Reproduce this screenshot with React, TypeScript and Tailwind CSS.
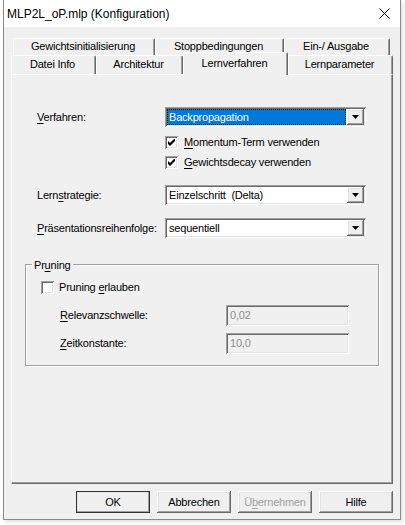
import React from "react";

const raised =
  "shadow-[inset_-1px_-1px_0_#696969,inset_1px_1px_0_#ffffff,inset_-2px_-2px_0_#a0a0a0,inset_2px_2px_0_#e3e3e3]";
const sunken =
  "shadow-[inset_1px_1px_0_#a0a0a0,inset_-1px_-1px_0_#ffffff,inset_2px_2px_0_#696969,inset_-2px_-2px_0_#e3e3e3]";

function U({ children }: { children: React.ReactNode }) {
  return <span className="underline underline-offset-[2px] decoration-[1px]">{children}</span>;
}

function Tab({ label, cls, selected }: { label: string; cls: string; selected?: boolean }) {
  return (
    <div
      className={
        "flex items-center justify-center pr-[2px] border-t border-l border-r border-t-white border-l-white border-r-[#696969] rounded-tl-[2px] rounded-tr-[2px] shadow-[inset_-1px_0_0_#a0a0a0] bg-[#f0f0f0] " +
        cls +
        (selected ? " relative z-10 -mb-px pb-[2px]" : "")
      }
    >
      {label}
    </div>
  );
}

function Arrow() {
  return (
    <svg width="7" height="4" viewBox="0 0 7 4">
      <polygon points="0,0 7,0 3.5,4" fill="#000" />
    </svg>
  );
}

function Combo({ value, selected }: { value: string; selected?: boolean }) {
  return (
    <div className={"w-[201px] h-[20px] bg-white flex p-[2px] " + sunken}>
      <div className="flex-1 flex items-stretch">
        {selected ? (
          <div className="flex-1 flex items-center bg-[#0078d7] text-white pl-[1px] mr-[1px] border border-dotted border-[#222]">
            {value}
          </div>
        ) : (
          <div className="flex-1 flex items-center pl-[2px] whitespace-pre">{value}</div>
        )}
      </div>
      <div className={"w-[17px] bg-[#f0f0f0] flex items-center justify-center " + raised}>
        <Arrow />
      </div>
    </div>
  );
}

function Check({ checked }: { checked?: boolean }) {
  return (
    <span className={"w-[13px] h-[13px] bg-white flex items-center justify-center shrink-0 " + sunken}>
      {checked && (
        <svg width="7" height="7" viewBox="0 0 7 7">
          <polygon points="0,2 2,4 7,-1 7,2 2,7 0,5" fill="#000" />
        </svg>
      )}
    </span>
  );
}

function Btn({ children, cls }: { children: React.ReactNode; cls?: string }) {
  return (
    <div
      className={
        "w-[74px] h-[22px] bg-[#f0f0f0] flex items-center justify-center " + raised + " " + (cls || "")
      }
    >
      {children}
    </div>
  );
}

export default function App() {
  return (
    <div className="w-[405px] h-[525px] bg-white font-['Liberation_Sans',Arial,sans-serif] text-[11px] tracking-[-0.2px] text-black">
      <div className="ml-[3px] w-[398px] h-[520px] border-l border-r border-b border-[#8a8a8a] bg-[#f0f0f0] flex flex-col shadow-[2px_2px_4px_rgba(0,0,0,0.12)]">
        {/* title bar */}
        <div className="h-[27px] bg-white flex items-center justify-between pl-[3px] pr-[10px] shrink-0">
          <span className="text-[12px] tracking-normal">MLP2L_oP.mlp (Konfiguration)</span>
          <svg width="11" height="11" viewBox="0 0 11 11">
            <path d="M0.5 0.5 L10.5 10.5 M10.5 0.5 L0.5 10.5" stroke="#000" strokeWidth="1" />
          </svg>
        </div>

        {/* body */}
        <div className="flex-1 flex flex-col px-[7px] pt-[11px] pb-[6px]">
          {/* tabs row 1 */}
          <div className="flex h-[17px] ml-[2px]">
            <Tab label="Gewichtsinitialisierung" cls="w-[142px] h-[18px] pb-[2px]" />
            <Tab label="Stoppbedingungen" cls="w-[129px] h-[18px] pb-[2px]" />
            <Tab label="Ein-/ Ausgabe" cls="w-[106px] h-[18px] pb-[2px]" />
          </div>
          {/* tabs row 2 */}
          <div className="flex h-[19px] items-end relative">
            <Tab label="Datei Info" cls="w-[85px] h-[19px] pb-[1px]" />
            <Tab label="Architektur" cls="w-[87px] h-[19px] pb-[1px]" />
            <Tab label="Lernverfahren" cls="w-[105px] h-[23px]" selected />
            <Tab label="Lernparameter" cls="w-[105px] h-[19px] pb-[1px]" />
          </div>

          {/* panel */}
          <div className="h-[410px] border border-t-white border-l-white border-r-[#696969] border-b-[#696969] shadow-[inset_-1px_-1px_0_#a0a0a0] flex flex-col">
            <div className="flex items-center mt-[32px] pl-[25px]">
              <div className="w-[128px]">
                <U>V</U>erfahren:
              </div>
              <Combo value="Backpropagation" selected />
            </div>
            <div className="flex items-center h-[20px] mt-[5px] pl-[153px]">
              <Check checked />
              <span className="ml-[6px]">
                <U>M</U>omentum-Term verwenden
              </span>
            </div>
            <div className="flex items-center h-[20px] pl-[153px]">
              <Check checked />
              <span className="ml-[6px]">
                <U>G</U>ewichtsdecay verwenden
              </span>
            </div>
            <div className="flex items-center mt-[13px] pl-[25px]">
              <div className="w-[128px]">
                Lern<U>s</U>trategie:
              </div>
              <Combo value="Einzelschritt  (Delta)" />
            </div>
            <div className="flex items-center mt-[13px] pl-[25px]">
              <div className="w-[128px]">
                <U>P</U>räsentationsreihenfolge:
              </div>
              <Combo value="sequentiell" />
            </div>

            {/* group box */}
            <div className="relative mt-[26px] ml-[13px] w-[354px] h-[102px] border border-[#a0a0a0] shadow-[inset_1px_1px_0_#ffffff,1px_1px_0_#ffffff] flex flex-col pl-[15px]">
              <span className="absolute -top-[8px] left-[6px] bg-[#f0f0f0] px-[2px]">
                Pr<U>u</U>ning
              </span>
              <div className="flex items-center h-[20px] mt-[12px]">
                <Check />
                <span className="ml-[5px]">
                  Pruning <U>e</U>rlauben
                </span>
              </div>
              <div className="flex items-center mt-[8px] pl-[19px]">
                <div className="w-[166px]">
                  <U>R</U>elevanzschwelle:
                </div>
                <div className={"w-[123px] h-[21px] flex items-center pl-[4px] text-[#8d8d8d] " + sunken}>0,02</div>
              </div>
              <div className="flex items-center mt-[7px] pl-[19px]">
                <div className="w-[166px]">
                  <U>Z</U>eitkonstante:
                </div>
                <div className={"w-[123px] h-[21px] flex items-center pl-[4px] text-[#8d8d8d] " + sunken}>10,0</div>
              </div>
            </div>
          </div>

          {/* buttons */}
          <div className="flex justify-end gap-[7px] mt-[7px]">
            <Btn cls="outline outline-1 outline-[#333] -outline-offset-1">OK</Btn>
            <Btn>Abbrechen</Btn>
            <Btn cls="text-[#a0a0a0]">
              Ü<U>b</U>ernehmen
            </Btn>
            <Btn>Hilfe</Btn>
          </div>
        </div>
      </div>
    </div>
  );
}
